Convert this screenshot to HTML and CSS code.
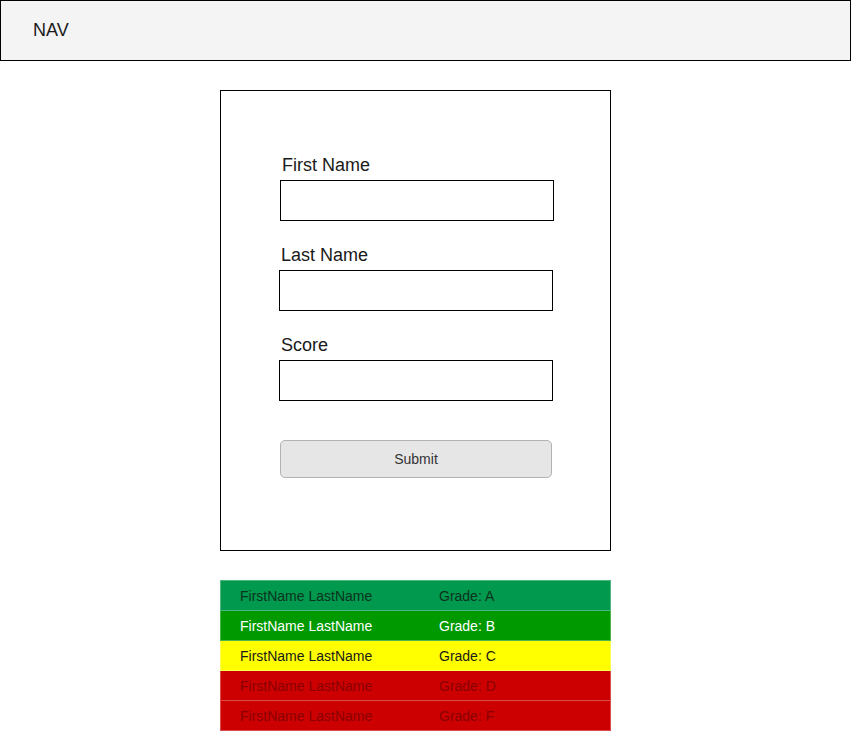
FILE: index.html
```html
<!DOCTYPE html>
<html lang="en">
<head>
<meta charset="utf-8">
<title>Grades</title>
<link rel="stylesheet" href="styles.css">
</head>
<body>
<nav class="nav">NAV</nav>
<main class="main">
  <form class="card">
    <div class="field">
      <label class="label label-first">First Name</label>
      <input class="input input-first" type="text">
    </div>
    <div class="field">
      <label class="label">Last Name</label>
      <input class="input" type="text">
    </div>
    <div class="field">
      <label class="label">Score</label>
      <input class="input" type="text">
    </div>
    <button class="submit" type="button">Submit</button>
  </form>
  <div class="results">
    <div class="row grade-a"><span>FirstName LastName</span><span>Grade: A</span></div>
    <div class="row grade-b"><span>FirstName LastName</span><span>Grade: B</span></div>
    <div class="row grade-c"><span>FirstName LastName</span><span>Grade: C</span></div>
    <div class="row grade-d"><span>FirstName LastName</span><span>Grade: D</span></div>
    <div class="row grade-f"><span>FirstName LastName</span><span>Grade: F</span></div>
  </div>
</main>
</body>
</html>
```
FILE: styles.css
```css
* { box-sizing: border-box; }
html, body { margin: 0; padding: 0; background: #fff; }
body { font-family: "Liberation Sans", Arial, sans-serif; color: #1a1a1a; }

.nav {
  width: 851px;
  height: 61px;
  border: 1px solid #000;
  background: #f4f4f4;
  padding-left: 32px;
  display: flex;
  align-items: center;
  font-size: 18px;
  color: #1a1a1a;
}

.main {
  padding-left: 220px;
  padding-top: 29px;
}

.card {
  width: 391px;
  height: 461px;
  border: 1px solid #000;
  padding: 64px 0 0 58px;
  display: flex;
  flex-direction: column;
  margin: 0;
}

.field {
  display: flex;
  flex-direction: column;
  margin-bottom: 24px;
}
.field:last-of-type { margin-bottom: 22px; }

.label {
  font-size: 18px;
  line-height: 20px;
  height: 20px;
  margin-bottom: 5px;
  padding-left: 2px;
  color: #1a1a1a;
}
.label-first { padding-left: 3px; }

.input {
  width: 274px;
  height: 41px;
  border: 1px solid #000;
  margin: 0;
  padding: 0;
  background: #fff;
  font: inherit;
}
.input-first { margin-left: 1px; }

.submit {
  margin-top: 17px;
  margin-left: 1px;
  width: 272px;
  height: 38px;
  background: #e6e6e6;
  border: 1px solid #b3b3b3;
  border-radius: 5px;
  font-family: "Liberation Sans", Arial, sans-serif;
  font-size: 14px;
  color: #333;
  padding: 0;
}

.results {
  margin-top: 29px;
  width: 391px;
}

.row {
  display: grid;
  grid-template-columns: 199px 1fr;
  height: 30px;
  align-items: center;
  padding-left: 19px;
  font-size: 14px;
  border: 1px solid rgba(255,255,255,0.3);
  border-top: none;
}
.row:first-child { border-top: 1px solid rgba(255,255,255,0.3); height: 31px; }

.grade-a { background: #00994d; color: #0a3320; }
.grade-b { background: #009900; color: #fff; }
.grade-c { background: #ffff00; color: #1a1a1a; }
.grade-d, .grade-f { background: #cc0000; color: #8a0000; }
```
